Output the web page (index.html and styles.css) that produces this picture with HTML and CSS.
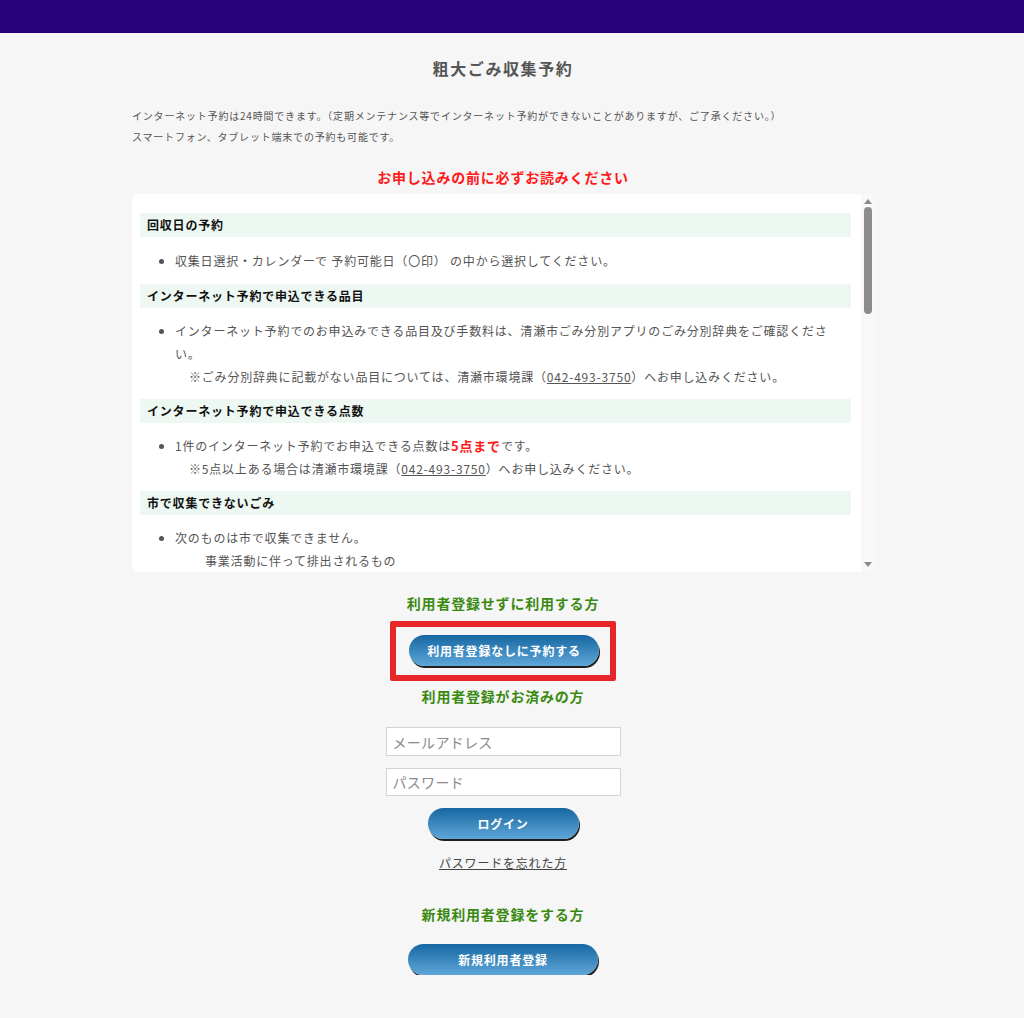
FILE: index.html
```html
<!DOCTYPE html>
<html lang="ja">
<head>
    <meta charset="UTF-8">
    <meta name="viewport" content="width=device-width, initial-scale=1.0">
    <title>粗大ごみ収集予約</title>
    <link rel="stylesheet" href="styles.css">
</head>
<body>

    <header class="topbar"></header>

    <main class="container">
        <h1 class="title">粗大ごみ収集予約</h1>

        <div class="intro">
            <p>インターネット予約は24時間できます。（定期メンテナンス等でインターネット予約ができないことがありますが、ご了承ください。）</p>
            <p>スマートフォン、タブレット端末での予約も可能です。</p>
        </div>

        <h2 class="notice">お申し込みの前に必ずお読みください</h2>

        <div class="rules-box">
            <div class="rules">
                <h3>回収日の予約</h3>
                <ul>
                    <li>収集日選択・カレンダーで 予約可能日（〇印） の中から選択してください。</li>
                </ul>

                <h3>インターネット予約で申込できる品目</h3>
                <ul>
                    <li>インターネット予約でのお申込みできる品目及び手数料は、清瀬市ごみ分別アプリのごみ分別辞典をご確認ください。
                        <div class="note">※ごみ分別辞典に記載がない品目については、清瀬市環境課（<a href="#">042-493-3750</a>）へお申し込みください。</div>
                    </li>
                </ul>

                <h3>インターネット予約で申込できる点数</h3>
                <ul>
                    <li>1件のインターネット予約でお申込できる点数は<strong class="red">5点まで</strong>です。
                        <div class="note">※5点以上ある場合は清瀬市環境課（<a href="#">042-493-3750</a>）へお申し込みください。</div>
                    </li>
                </ul>

                <h3>市で収集できないごみ</h3>
                <ul>
                    <li>次のものは市で収集できません。
                        <div class="sub">事業活動に伴って排出されるもの</div>
                        <div class="sub">家電リサイクル法対象品目（エアコン、テレビ、冷蔵庫・冷凍庫、洗濯機・衣類乾燥機）</div>
                        <div class="sub">パソコン（メーカー回収となります）</div>
                        <div class="sub">オートバイ、タイヤ、バッテリー、消火器</div>
                    </li>
                </ul>
            </div>
            <!-- fake scrollbar, the shot shows the thumb near the top -->
            <div class="scrollbar">
                <span class="arrow arrow-up"></span>
                <span class="thumb"></span>
                <span class="arrow arrow-down"></span>
            </div>
        </div>

        <h2 class="group">利用者登録せずに利用する方</h2>
        <div class="highlight">
            <button type="button" class="btn">利用者登録なしに予約する</button>
        </div>

        <h2 class="group group-tight">利用者登録がお済みの方</h2>
        <form class="login">
            <input type="text" class="field" placeholder="メールアドレス">
            <input type="password" class="field field-short" placeholder="パスワード">
            <button type="button" class="btn btn-small">ログイン</button>
            <a href="#" class="forgot">パスワードを忘れた方</a>
        </form>

        <h2 class="group group-new">新規利用者登録をする方</h2>
        <button type="button" class="btn btn-new">新規利用者登録</button>
    </main>

</body>
</html>
```

FILE: styles.css
```css
body {
    margin: 0;
    background: #f6f6f6;
    color: #555;
    font-family: "Noto Sans CJK JP", "Noto Sans", sans-serif;
    letter-spacing: 0.8px;
}
.topbar {
    height: 33px;
    background: #28007a;
}
.container {
    width: 742px;
    margin-left: 132px;
    display: flex;
    flex-direction: column;
    align-items: center;
}
.title {
    margin: 23px 0 0;
    font-size: 16px;
    line-height: 24px;
    letter-spacing: 1.6px;
    color: #555;
}
.intro {
    align-self: stretch;
    margin-top: 25px;
    font-size: 10px;
    line-height: 21px;
}
.intro p {
    margin: 0;
}
.notice {
    margin: 20px 0 0;
    font-size: 14px;
    line-height: 20px;
    color: #ff1a1a;
}
.rules-box {
    align-self: stretch;
    display: flex;
    height: 378px;
    margin-top: 7px;
    background: #fff;
    border-radius: 6px;
    overflow: hidden;
}
.rules {
    flex: 1;
    padding: 19px 10px 0 8px;
    overflow: hidden;
    font-size: 12px;
}
.rules h3 {
    margin: 0;
    padding: 0 7px;
    font-size: 12px;
    line-height: 24px;
    color: #111;
    background: #eef8f2;
}
.rules ul {
    margin: 11px 0;
    padding: 0 10px 0 35px;
    line-height: 23px;
}
.rules ul:first-of-type {
    margin-top: 12px;
    margin-bottom: 12px;
}
.rules a {
    color: #555;
}
.rules .note {
    padding-left: 14px;
}
.rules .sub {
    padding-left: 30px;
}
.red {
    color: #ff1a1a;
    font-size: 13px;
}
.scrollbar {
    width: 13px;
    display: flex;
    flex-direction: column;
    align-items: center;
    background: #f8f8f8;
}
.arrow {
    width: 0;
    height: 0;
    border-left: 4px solid transparent;
    border-right: 4px solid transparent;
}
.arrow-up {
    margin-top: 5px;
    border-bottom: 5px solid #8a8a8a;
}
.arrow-down {
    margin-top: auto;
    margin-bottom: 5px;
    border-top: 5px solid #8a8a8a;
}
.thumb {
    width: 8px;
    height: 107px;
    margin-top: 3px;
    border-radius: 4px;
    background: #8c8c8c;
}
.group {
    margin: 21px 0 0;
    font-size: 14px;
    line-height: 20px;
    color: #3a8a12;
}
.group-tight {
    margin-top: 5px;
}
.group-new {
    margin-top: 31px;
}
.highlight {
    margin-top: 8px;
    padding: 8px 11px 9px 13px;
    border: 6px solid #e8262a;
    border-radius: 2px;
}
.btn {
    display: block;
    width: 190px;
    height: 31px;
    border: none;
    border-radius: 16px;
    background: linear-gradient(to bottom, #1767a2, #5ea6d8);
    box-shadow: 1px 2px 0 #1e1e1e;
    color: #fff;
    font-family: inherit;
    font-size: 12px;
    font-weight: bold;
    letter-spacing: 0.8px;
    cursor: pointer;
}
.btn-small {
    width: 151px;
    margin-top: 12px;
}
.btn-new {
    margin-top: 20px;
}
.login {
    margin-top: 21px;
    display: flex;
    flex-direction: column;
    align-items: center;
}
.field {
    box-sizing: border-box;
    width: 235px;
    height: 29px;
    padding: 0 6px;
    border: 1px solid #d4d4d4;
    background: #fff;
    font-family: inherit;
    font-size: 14px;
    letter-spacing: 0.3px;
}
.field::placeholder {
    color: #8a8a8a;
}
.field-short {
    height: 28px;
    margin-top: 12px;
}
.forgot {
    margin-top: 14px;
    font-size: 12px;
    line-height: 20px;
    color: #444;
}
```
